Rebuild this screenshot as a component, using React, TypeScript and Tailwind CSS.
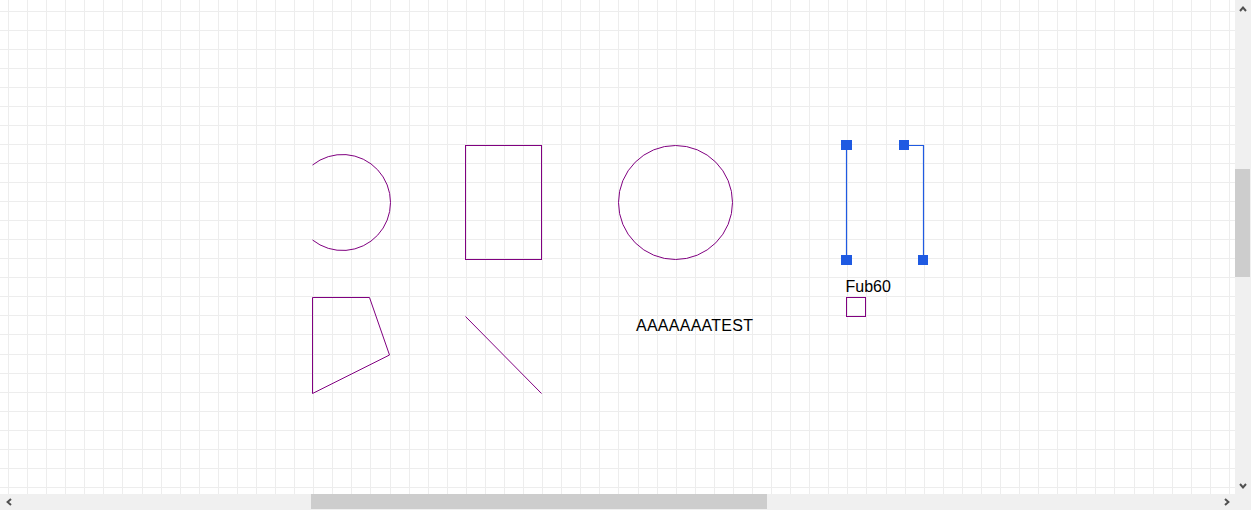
import React from "react";

const W = 1235;
const H = 494;

// grid spacing is not a whole number in the source, so floor each line
const xLines: number[] = [];
for (let i = 0; 8.47 + i * 19.078 < W; i++) xLines.push(Math.floor(8.47 + i * 19.078));
const yLines: number[] = [];
for (let i = 0; 11 + i * 19.0585 < H; i++) yLines.push(Math.floor(11 + i * 19.0585));

const PURPLE = "#800080";
const BLUE = "#1f5ae2";

function Chevron({ dir }: { dir: "up" | "down" | "left" | "right" }) {
  const rot = { up: 0, right: 90, down: 180, left: 270 }[dir];
  return (
    <svg width="8" height="8" viewBox="0 0 8 8" style={{ transform: `rotate(${rot}deg)` }}>
      <path d="M1 6 L4 2.6 L7 6" fill="none" stroke="#505050" strokeWidth="2" />
    </svg>
  );
}

function Canvas() {
  return (
    <div className="relative h-[494px] w-[1235px] bg-white">
      <svg width={W} height={H} className="block">
        <g fill="#ededed">
          {xLines.map((x) => (
            <rect key={"x" + x} x={x} y={0} width={1} height={H} />
          ))}
          {yLines.map((y) => (
            <rect key={"y" + y} x={0} y={y} width={W} height={1} />
          ))}
        </g>

        <g fill="none" stroke={PURPLE} strokeWidth={1}>
          <path d="M312.5 165.03 A48 48 0 1 1 312.5 239.97" />
          <rect x={465.5} y={145.5} width={76} height={114} />
          <circle cx={675.5} cy={202.5} r={57} />
          <polygon points="312.5,297.5 369.5,297.5 389.5,355 312.5,393.5" />
          <line x1={465.5} y1={316.5} x2={541.5} y2={393.5} />
          <rect x={846.5} y={297.5} width={19} height={19} />
        </g>

        <g fill="none" stroke={BLUE} strokeWidth={1.2}>
          <line x1={846.5} y1={145} x2={846.5} y2={259.5} />
          <polyline points="903.5,145.5 923.5,145.5 923.5,259.5" />
        </g>
        <g fill={BLUE}>
          <rect x={841} y={140} width={11} height={10} />
          <rect x={841} y={255} width={11} height={10} />
          <rect x={899} y={140} width={10} height={10} />
          <rect x={918} y={255} width={10} height={10} />
        </g>

        <g fill="#000" fontFamily="'Liberation Sans', Arial, sans-serif" fontSize={16}>
          <text x={636} y={331} textLength={117}>
            AAAAAAATEST
          </text>
          <text x={845.5} y={292}>Fub60</text>
        </g>
      </svg>
    </div>
  );
}

export default function App() {
  return (
    <div className="flex h-[510px] w-[1251px] flex-col overflow-hidden bg-white">
      <div className="flex h-[494px]">
        <Canvas />
        <div className="flex w-4 flex-col bg-[#f0f0f0]">
          <div className="flex h-[17px] items-center justify-center">
            <Chevron dir="up" />
          </div>
          <div className="flex-1">
            <div className="mt-[152px] h-[108px] w-[15px] bg-[#cdcdcd]" />
          </div>
          <div className="flex h-[17px] items-center justify-center">
            <Chevron dir="down" />
          </div>
        </div>
      </div>
      <div className="flex h-4 bg-[#f0f0f0]">
        <div className="flex w-[17px] items-center justify-center">
          <Chevron dir="left" />
        </div>
        <div className="flex-1">
          <div className="ml-[294px] h-[15px] w-[456px] bg-[#cdcdcd]" />
        </div>
        <div className="flex w-[17px] items-center justify-center">
          <Chevron dir="right" />
        </div>
        <div className="w-4" />
      </div>
    </div>
  );
}
